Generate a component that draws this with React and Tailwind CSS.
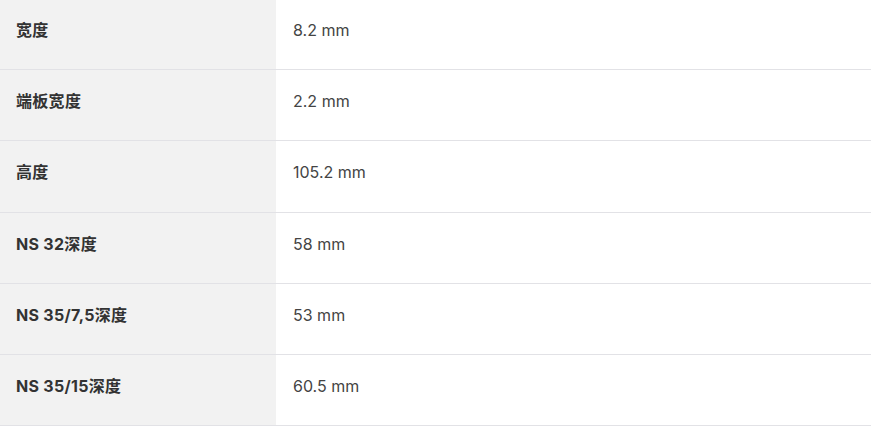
import React from 'react';

const rows = [
  { label: '宽度', value: '8.2 mm' },
  { label: '端板宽度', value: '2.2 mm' },
  { label: '高度', value: '105.2 mm' },
  { label: 'NS 32深度', value: '58 mm' },
  { label: 'NS 35/7,5深度', value: '53 mm' },
  { label: 'NS 35/15深度', value: '60.5 mm' },
];

const App = () => {
  return (
    <div
      className="w-[871px] h-[426px] overflow-hidden bg-white"
      style={{ fontFamily: 'Inter, "Noto Sans CJK SC", sans-serif' }}
    >
      <div className="-mt-px">
        {rows.map((row) => (
          <div key={row.label} className="flex h-[71.2px] border-b border-[#e2e2e6]">
            <div className="w-[276px] bg-[#f2f2f2] pl-4 pt-[20px] text-[16px] leading-[22px] font-bold tracking-[0.3px] text-[#333]">
              {row.label}
            </div>
            <div className="flex-1 pl-[17px] pt-[20px] text-[16px] leading-[22px] text-[#444]">
              {row.value}
            </div>
          </div>
        ))}
      </div>
    </div>
  );
};

export default App;
